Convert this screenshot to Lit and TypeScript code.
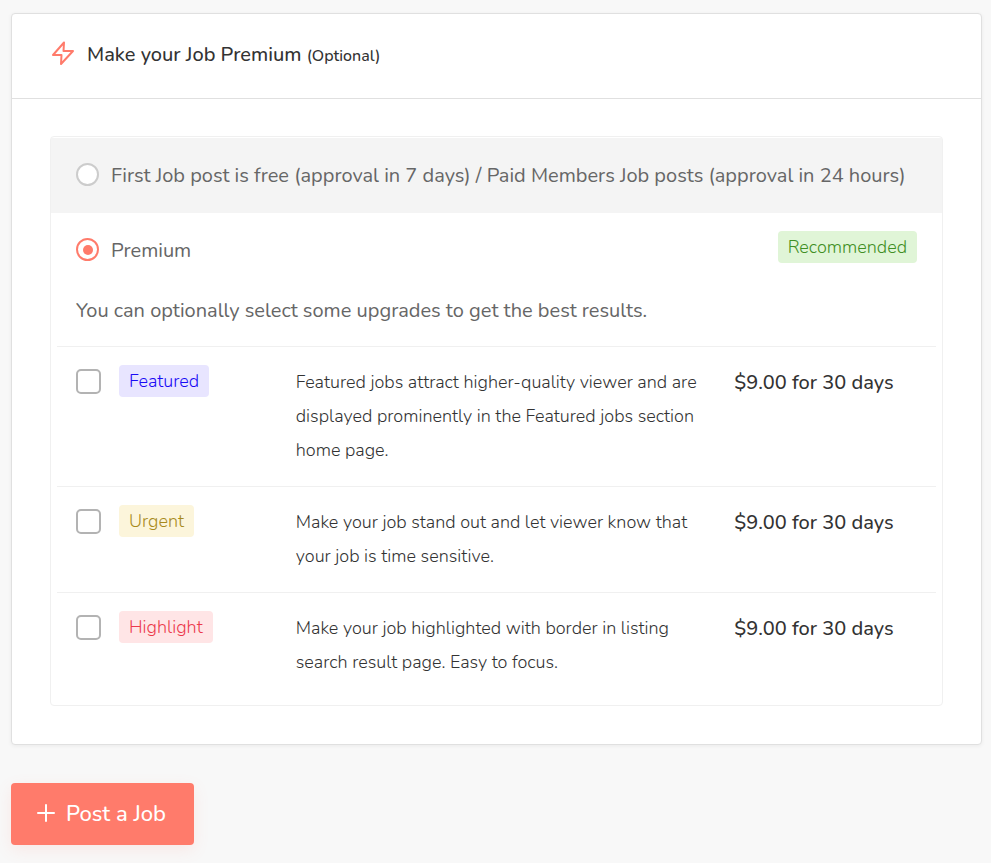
import { LitElement, html, css } from "lit";
import { customElement, state } from "lit/decorators.js";

interface Upgrade {
  id: string;
  name: string;
  text: string;
  price: string;
}

const UPGRADES: Upgrade[] = [
  {
    id: "featured",
    name: "Featured",
    text: "Featured jobs attract higher-quality viewer and are displayed prominently in the Featured jobs section home page.",
    price: "$9.00 for 30 days",
  },
  {
    id: "urgent",
    name: "Urgent",
    text: "Make your job stand out and let viewer know that your job is time sensitive.",
    price: "$9.00 for 30 days",
  },
  {
    id: "highlight",
    name: "Highlight",
    text: "Make your job highlighted with border in listing search result page. Easy to focus.",
    price: "$9.00 for 30 days",
  },
];

@customElement("app-root")
export class AppRoot extends LitElement {
  @state() private plan = "premium";

  static styles = css`
    :host {
      display: block;
      box-sizing: border-box;
      min-height: 100vh;
      padding: 13px 9px 18px 11px;
      background: #f8f8f8;
      color: #666;
      font-family: "Nunito", "Open Sans", "Noto Sans", sans-serif;
      font-size: 20px;
      line-height: 34px;
    }
    * {
      box-sizing: border-box;
    }
    .card {
      background: #fff;
      border: 1px solid #e0e0e0;
      border-radius: 4px;
      box-shadow: 0 1px 4px rgba(0, 0, 0, 0.06);
    }
    .head {
      display: flex;
      align-items: center;
      gap: 12px;
      height: 85px;
      padding: 0 39px 2px;
      border-bottom: 1px solid #e0e0e0;
    }
    .bolt {
      width: 24px;
      height: 26px;
      margin-bottom: 4px;
    }
    h2 {
      margin: 0;
      font-size: 20px;
      font-weight: 500;
      color: #333;
    }
    small {
      font-size: 16px;
    }
    .box {
      margin: 37px 38px 38px;
      padding: 1px 0 7px;
      border: 1px solid #f0f0f0;
      border-radius: 4px;
    }
    .option {
      display: flex;
      align-items: center;
      height: 75px;
      padding: 0 25px 2px;
    }
    .shaded {
      background: #f4f4f4;
    }
    .option label {
      display: flex;
      align-items: center;
      gap: 12px;
      flex: 1;
    }
    .label {
      padding-top: 2px;
    }
    input {
      appearance: none;
      flex: none;
      margin: 0;
      background: #fff;
    }
    .radio {
      display: grid;
      place-items: center;
      width: 23px;
      height: 23px;
      border: 2px solid #ccc;
      border-radius: 50%;
    }
    .radio:checked {
      border-color: #ff7b6b;
    }
    .radio:checked::before {
      content: "";
      width: 10px;
      height: 10px;
      border-radius: 50%;
      background: #ff7b6b;
    }
    .check {
      width: 25px;
      height: 25px;
      border: 2px solid #b3b3b3;
      border-radius: 5px;
    }
    .check:checked {
      border-color: #ff7b6b;
      background: #ff7b6b;
    }
    .tag {
      padding: 0 10px;
      border-radius: 4px;
      font-size: 18px;
      font-weight: 300;
      line-height: 32px;
    }
    .recommended {
      margin-bottom: 6px;
      background: #e0f5d7;
      color: #3f8f24;
    }
    .featured {
      background: #e8e5ff;
      color: #1a0bf5;
    }
    .urgent {
      background: #fcf5db;
      color: #a88a1c;
    }
    .highlight {
      background: #ffe5e6;
      color: #ec3a4c;
    }
    .intro {
      margin: 0;
      padding: 6px 25px 18px;
    }
    .upgrades {
      margin: 0 6px;
      padding: 0;
      list-style: none;
    }
    .upgrade {
      display: grid;
      grid-template-columns: 220fr 439fr 184fr;
      padding: 18px 18px 19px 19px;
      border-top: 1px solid #f0f0f0;
    }
    .pick {
      display: flex;
      align-items: center;
      justify-self: start;
      align-self: start;
      gap: 18px;
    }
    .text {
      margin: 0;
      padding-right: 32px;
      font-size: 18px;
      font-weight: 300;
      color: #333;
    }
    .price {
      padding-top: 1px;
      font-weight: 500;
      color: #333;
      white-space: nowrap;
    }
    .post {
      display: inline-flex;
      align-items: center;
      gap: 11px;
      height: 62px;
      margin-top: 38px;
      padding: 0 28px 0 26px;
      border: 0;
      border-radius: 4px;
      background: #ff7b6b;
      box-shadow: 0 5px 16px rgba(255, 123, 107, 0.12);
      color: #fff;
      font: inherit;
      font-size: 22px;
      font-weight: 500;
    }
    .plus {
      width: 18px;
      height: 18px;
      margin-bottom: 3px;
    }
  `;

  private renderUpgrade(u: Upgrade) {
    return html`
      <li class="upgrade">
        <label class="pick">
          <input class="check" type="checkbox" name=${u.id} />
          <span class="tag ${u.id}">${u.name}</span>
        </label>
        <p class="text">${u.text}</p>
        <span class="price">${u.price}</span>
      </li>
    `;
  }

  private renderRadio(value: string, label: string) {
    return html`
      <label>
        <input
          class="radio"
          type="radio"
          name="plan"
          value=${value}
          .checked=${this.plan === value}
          @change=${() => (this.plan = value)}
        />
        <span class="label">${label}</span>
      </label>
    `;
  }

  render() {
    return html`
      <section class="card">
        <header class="head">
          <svg class="bolt" viewBox="0 0 24 26" fill="none" stroke="#ff7b6b" stroke-width="2" stroke-linejoin="round" aria-hidden="true">
            <path d="M13 2.5 2 15h8.5L10 24 22 11h-9.5z" />
          </svg>
          <h2>Make your Job Premium <small>(Optional)</small></h2>
        </header>
        <div class="box">
          <div class="option shaded">
            ${this.renderRadio(
              "free",
              "First Job post is free (approval in 7 days) / Paid Members Job posts (approval in 24 hours)"
            )}
          </div>
          <div class="option">
            ${this.renderRadio("premium", "Premium")}
            <span class="tag recommended">Recommended</span>
          </div>
          <p class="intro">You can optionally select some upgrades to get the best results.</p>
          <ul class="upgrades">
            ${UPGRADES.map((u) => this.renderUpgrade(u))}
          </ul>
        </div>
      </section>
      <button class="post" type="button">
        <svg class="plus" viewBox="0 0 18 18" stroke="#fff" stroke-width="2" stroke-linecap="round" aria-hidden="true">
          <path d="M9 1v16M1 9h16" />
        </svg>
        Post a Job
      </button>
    `;
  }
}
